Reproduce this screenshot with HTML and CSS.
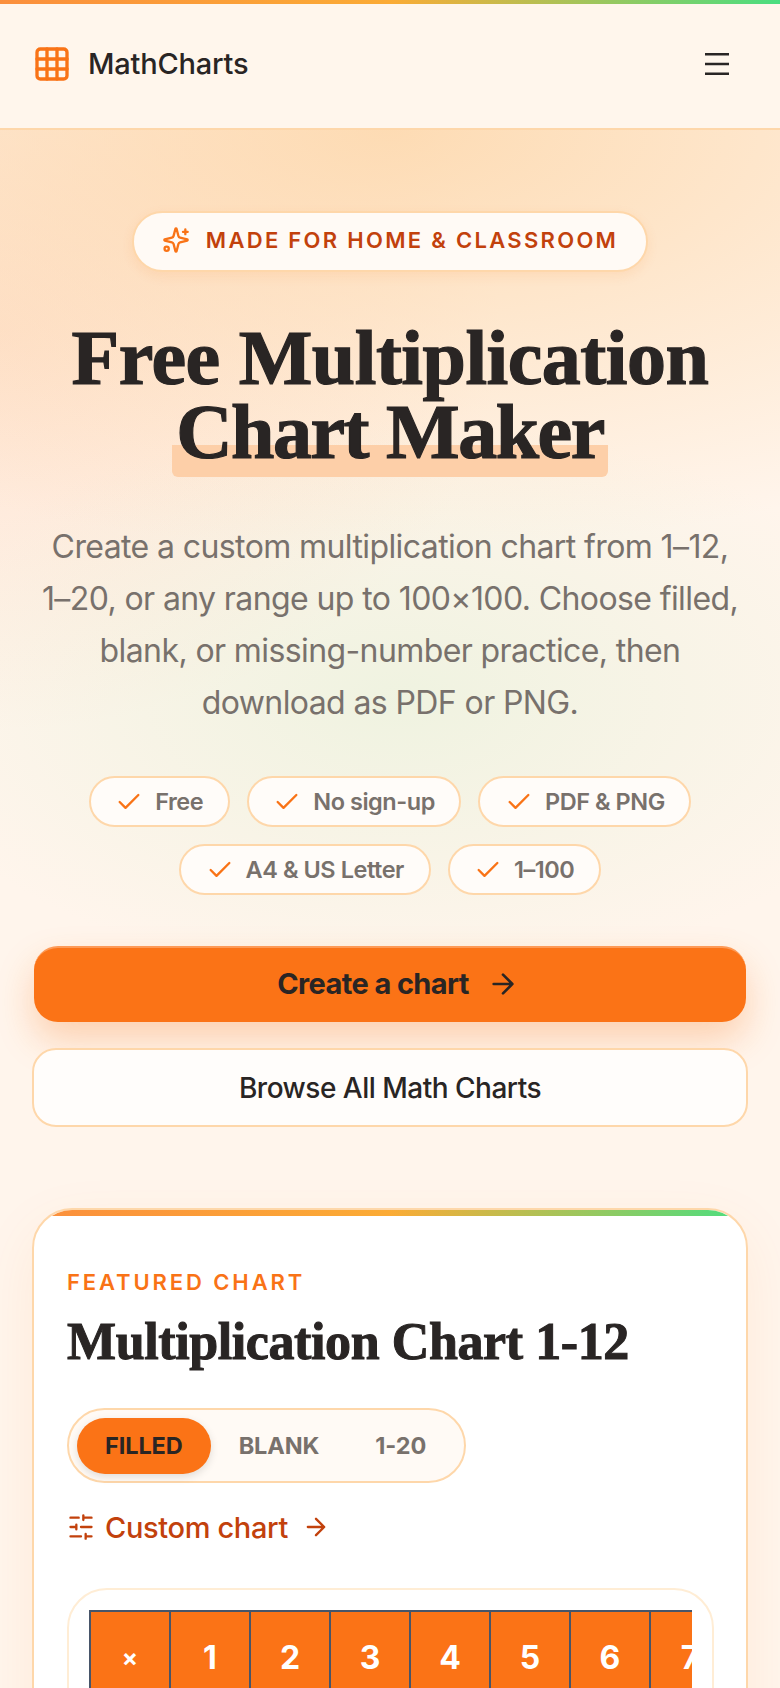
FILE: index.html
```html
<!DOCTYPE html>
<html lang="en">
<head>
<meta charset="utf-8">
<title>Free Multiplication Chart Maker</title>
<link rel="stylesheet" href="styles.css">
</head>
<body>
<div class="topbar"></div>
<header class="header">
  <a class="brand">
    <svg class="icon-logo" viewBox="0 0 24 24" fill="none" stroke="currentColor" stroke-width="2" stroke-linecap="round" stroke-linejoin="round"><rect x="3" y="3" width="18" height="18" rx="2"/><path d="M3 9h18M3 15h18M9 3v18M15 3v18"/></svg>
    <span>MathCharts</span>
  </a>
  <svg class="icon-menu" viewBox="0 0 24 22" fill="none" stroke="currentColor" stroke-width="2.4"><path d="M0 1.2h24M0 11h24M0 20.8h24"/></svg>
</header>
<main class="main">
  <section class="hero">
    <div class="badge">
      <svg class="icon" viewBox="0 0 24 24" fill="none" stroke="currentColor" stroke-width="2" stroke-linecap="round" stroke-linejoin="round"><path d="M9.937 15.5A2 2 0 0 0 8.5 14.063l-6.135-1.582a.5.5 0 0 1 0-.962L8.5 9.936A2 2 0 0 0 9.937 8.5l1.582-6.135a.5.5 0 0 1 .963 0L14.063 8.5A2 2 0 0 0 15.5 9.937l6.135 1.581a.5.5 0 0 1 0 .964L15.5 14.063a2 2 0 0 0-1.437 1.437l-1.582 6.135a.5.5 0 0 1-.963 0z"/><path d="M20 3v4M22 5h-4"/><circle cx="4" cy="19.5" r="1.8"/></svg>
      <span>MADE FOR HOME &amp; CLASSROOM</span>
    </div>
    <h1 class="title">Free Multiplication<br><span class="mark">Chart Maker</span></h1>
    <p class="lead">Create a custom multiplication chart from 1–12, 1–20, or any range up to 100×100. Choose filled, blank, or missing-number practice, then download as PDF or PNG.</p>
    <ul class="chips">
      <li class="chip"><svg class="icon" viewBox="0 0 24 24" fill="none" stroke="currentColor" stroke-width="2" stroke-linecap="round" stroke-linejoin="round"><path d="M20 6 9 17l-5-5"/></svg>Free</li>
      <li class="chip"><svg class="icon" viewBox="0 0 24 24" fill="none" stroke="currentColor" stroke-width="2" stroke-linecap="round" stroke-linejoin="round"><path d="M20 6 9 17l-5-5"/></svg>No sign-up</li>
      <li class="chip"><svg class="icon" viewBox="0 0 24 24" fill="none" stroke="currentColor" stroke-width="2" stroke-linecap="round" stroke-linejoin="round"><path d="M20 6 9 17l-5-5"/></svg>PDF &amp; PNG</li>
      <li class="chip"><svg class="icon" viewBox="0 0 24 24" fill="none" stroke="currentColor" stroke-width="2" stroke-linecap="round" stroke-linejoin="round"><path d="M20 6 9 17l-5-5"/></svg>A4 &amp; US Letter</li>
      <li class="chip"><svg class="icon" viewBox="0 0 24 24" fill="none" stroke="currentColor" stroke-width="2" stroke-linecap="round" stroke-linejoin="round"><path d="M20 6 9 17l-5-5"/></svg>1–100</li>
    </ul>
    <div class="actions">
      <a class="btn btn-primary">Create a chart
        <svg class="icon-lg" viewBox="0 0 24 24" fill="none" stroke="currentColor" stroke-width="2" stroke-linecap="round" stroke-linejoin="round"><path d="M5 12h14M12 5l7 7-7 7"/></svg>
      </a>
      <a class="btn btn-secondary">Browse All Math Charts</a>
    </div>
  </section>
  <section class="card">
    <div class="eyebrow">FEATURED CHART</div>
    <h2 class="card-title">Multiplication Chart 1-12</h2>
    <div class="tabs">
      <span class="tab tab-active">FILLED</span>
      <span class="tab">BLANK</span>
      <span class="tab">1-20</span>
    </div>
    <a class="custom">
      <svg class="icon" viewBox="0 0 24 24" fill="none" stroke="currentColor" stroke-width="2" stroke-linecap="round" stroke-linejoin="round"><path d="M21 4h-7M10 4H3M21 12h-9M8 12H3M21 20h-5M12 20H3M14 2v4M8 10v4M16 18v4"/></svg>
      <span>Custom chart</span>
      <svg class="icon" viewBox="0 0 24 24" fill="none" stroke="currentColor" stroke-width="2" stroke-linecap="round" stroke-linejoin="round"><path d="M5 12h14M12 5l7 7-7 7"/></svg>
    </a>
    <div class="chart-wrap">
      <div class="chart-scroll">
        <table class="chart">
          <tr>
            <th class="corner">×</th><th>1</th><th>2</th><th>3</th><th>4</th><th>5</th><th>6</th><th>7</th><th>8</th><th>9</th><th>10</th><th>11</th><th>12</th>
          </tr>
        </table>
      </div>
    </div>
  </section>
</main>
</body>
</html>
```
FILE: styles.css
```css
* { box-sizing: border-box; }
html, body { margin: 0; padding: 0; }
body {
  height: 100vh;
  overflow: hidden;
  background: #fff5ec;
  color: #292524;
  font-family: Inter, "Noto Sans", sans-serif;
}
a { color: inherit; text-decoration: none; }
.icon { width: 28px; height: 28px; flex: none; display: block; }
.icon-lg { width: 32px; height: 32px; flex: none; display: block; }
.topbar { height: 4px; background: linear-gradient(90deg, #fb8f3c 0%, #fbab35 50%, #4ade80 100%); }
.header {
  height: 126px;
  display: flex;
  align-items: center;
  justify-content: space-between;
  padding: 0 51px 5px 32px;
  background: #fff6ec;
  border-bottom: 2px solid #fed7aa;
}
.brand { display: flex; align-items: center; gap: 16px; font-size: 29px; font-weight: 500; letter-spacing: -0.2px; }
.icon-logo { width: 40px; height: 40px; color: #f97316; display: block; }
.icon-menu { width: 24px; height: 22px; color: #292524; display: block; }
.main {
  background:
    radial-gradient(ellipse 520px 280px at 400px 570px, rgba(220,240,210,.45), rgba(220,240,210,0)),
    radial-gradient(ellipse 900px 420px at 50% 0, rgba(253,215,170,.85), rgba(253,215,170,0) 100%),
    radial-gradient(ellipse 500px 400px at 0 200px, rgba(254,215,190,.6), rgba(254,215,190,0));
}
.hero { display: flex; flex-direction: column; align-items: center; padding: 81px 32px 0; text-align: center; }
.badge {
  height: 61px;
  display: flex;
  align-items: center;
  gap: 16px;
  padding: 0 28px 3px;
  border-radius: 31px;
  background: #fffaf5;
  border: 2px solid #fed7aa;
  box-shadow: 0 4px 12px rgba(249,115,22,.1);
  font-size: 22px;
  font-weight: 600;
  letter-spacing: 2.3px;
  color: #c2410c;
}
.badge .icon { color: #f97316; }
.title {
  margin: 49px 0 0;
  font-family: "Liberation Serif", serif;
  font-weight: 700;
  font-size: 78px;
  line-height: 74px;
  letter-spacing: -0.5px;
  color: #292524;
  -webkit-text-stroke: 1.2px #292524;
}
.mark {
  display: inline-block;
  padding: 0 4px 8px;
  margin-bottom: -8px;
  letter-spacing: -1.5px;
  border-radius: 6px;
  background: linear-gradient(#fdcfa8, #fdcfa8) left bottom / 100% 32px no-repeat;
}
.lead { max-width: 704px; margin: 52px 0 0; font-size: 32px; line-height: 52px; font-weight: 400; letter-spacing: -0.6px; color: #78716c; }
.chips {
  list-style: none;
  margin: 47px 0 0;
  padding: 0;
  display: flex;
  flex-wrap: wrap;
  justify-content: center;
  gap: 17px;
}
.chip {
  height: 51px;
  display: flex;
  align-items: center;
  gap: 12px;
  padding: 0 24.5px;
  border: 2px solid #fed7aa;
  border-radius: 26px;
  background: #fffcf9;
  font-size: 23.5px;
  font-weight: 600;
  letter-spacing: -0.45px;
  color: #78716c;
}
.chip .icon { color: #f97316; }
.actions { width: 100%; margin-top: 51px; display: flex; flex-direction: column; align-items: center; gap: 26px; }
.btn { display: flex; align-items: center; justify-content: center; border-radius: 24px; font-size: 28px; }
.btn-primary {
  width: 712px;
  height: 76px;
  gap: 18px;
  padding: 0 0 3px 16px;
  background: #fb7316;
  border-top: 2px solid #fd9a57;
  font-size: 29px;
  font-weight: 700;
  letter-spacing: -0.6px;
  box-shadow: 0 18px 36px rgba(249,115,22,.28);
}
.btn-secondary {
  width: 716px;
  height: 79px;
  background: #fffdfb;
  border: 2px solid #fed7aa;
  font-weight: 500;
  letter-spacing: -0.5px;
}
.card {
  position: relative;
  margin: 81px 32px 0;
  padding: 58px 33px 0;
  height: 600px;
  border: 2px solid #fed7aa;
  border-radius: 40px;
  background: #fff;
  overflow: hidden;
  box-shadow: 0 20px 60px rgba(249,115,22,.08);
}
.card::before {
  content: "";
  position: absolute;
  left: 0; right: 0; top: 0;
  height: 6px;
  background: linear-gradient(90deg, #fb8f3c 0%, #fbab35 50%, #4ade80 100%);
}
.eyebrow { font-size: 22px; font-weight: 600; letter-spacing: 2.9px; line-height: 28px; color: #f97316; }
.card-title {
  margin: 16px 0 0;
  font-family: "Liberation Serif", serif;
  font-size: 52px;
  line-height: 60px;
  font-weight: 700;
  letter-spacing: -0.4px;
  -webkit-text-stroke: 1px #292524;
}
.tabs {
  width: 399px;
  height: 75px;
  margin-top: 36px;
  padding: 8px;
  display: flex;
  align-items: center;
  border: 2px solid #fed7aa;
  border-radius: 38px;
  background: #fffaf5;
}
.tab {
  flex: none;
  height: 56px;
  padding: 0 28px;
  display: flex;
  align-items: center;
  border-radius: 28px;
  font-size: 23.5px;
  font-weight: 700;
  letter-spacing: -0.1px;
  white-space: nowrap;
  color: #78716c;
}
.tab-active { background: #fb7316; color: #292524; box-shadow: 0 3px 8px rgba(0,0,0,.12); }
.custom { display: flex; align-items: center; gap: 10px; margin-top: 24px; height: 40px; font-size: 29px; font-weight: 500; letter-spacing: -0.35px; color: #c2410c; }
.custom span { margin-right: 4px; }
.chart-wrap {
  margin-top: 41px;
  padding: 20px;
  width: 647px;
  height: 300px;
  border: 2px solid #ffedd5;
  border-radius: 40px;
  background: #fff;
}
.chart-scroll { overflow: hidden; }
.chart { border-collapse: collapse; table-layout: fixed; }
.chart th {
  width: 80px;
  min-width: 80px;
  height: 92px;
  padding: 0;
  background: #fb7316;
  border: 2px solid #475569;
  color: #fff;
  font-size: 32px;
  font-weight: 700;
  text-align: center;
}
.chart .corner { font-size: 24px; }
```
